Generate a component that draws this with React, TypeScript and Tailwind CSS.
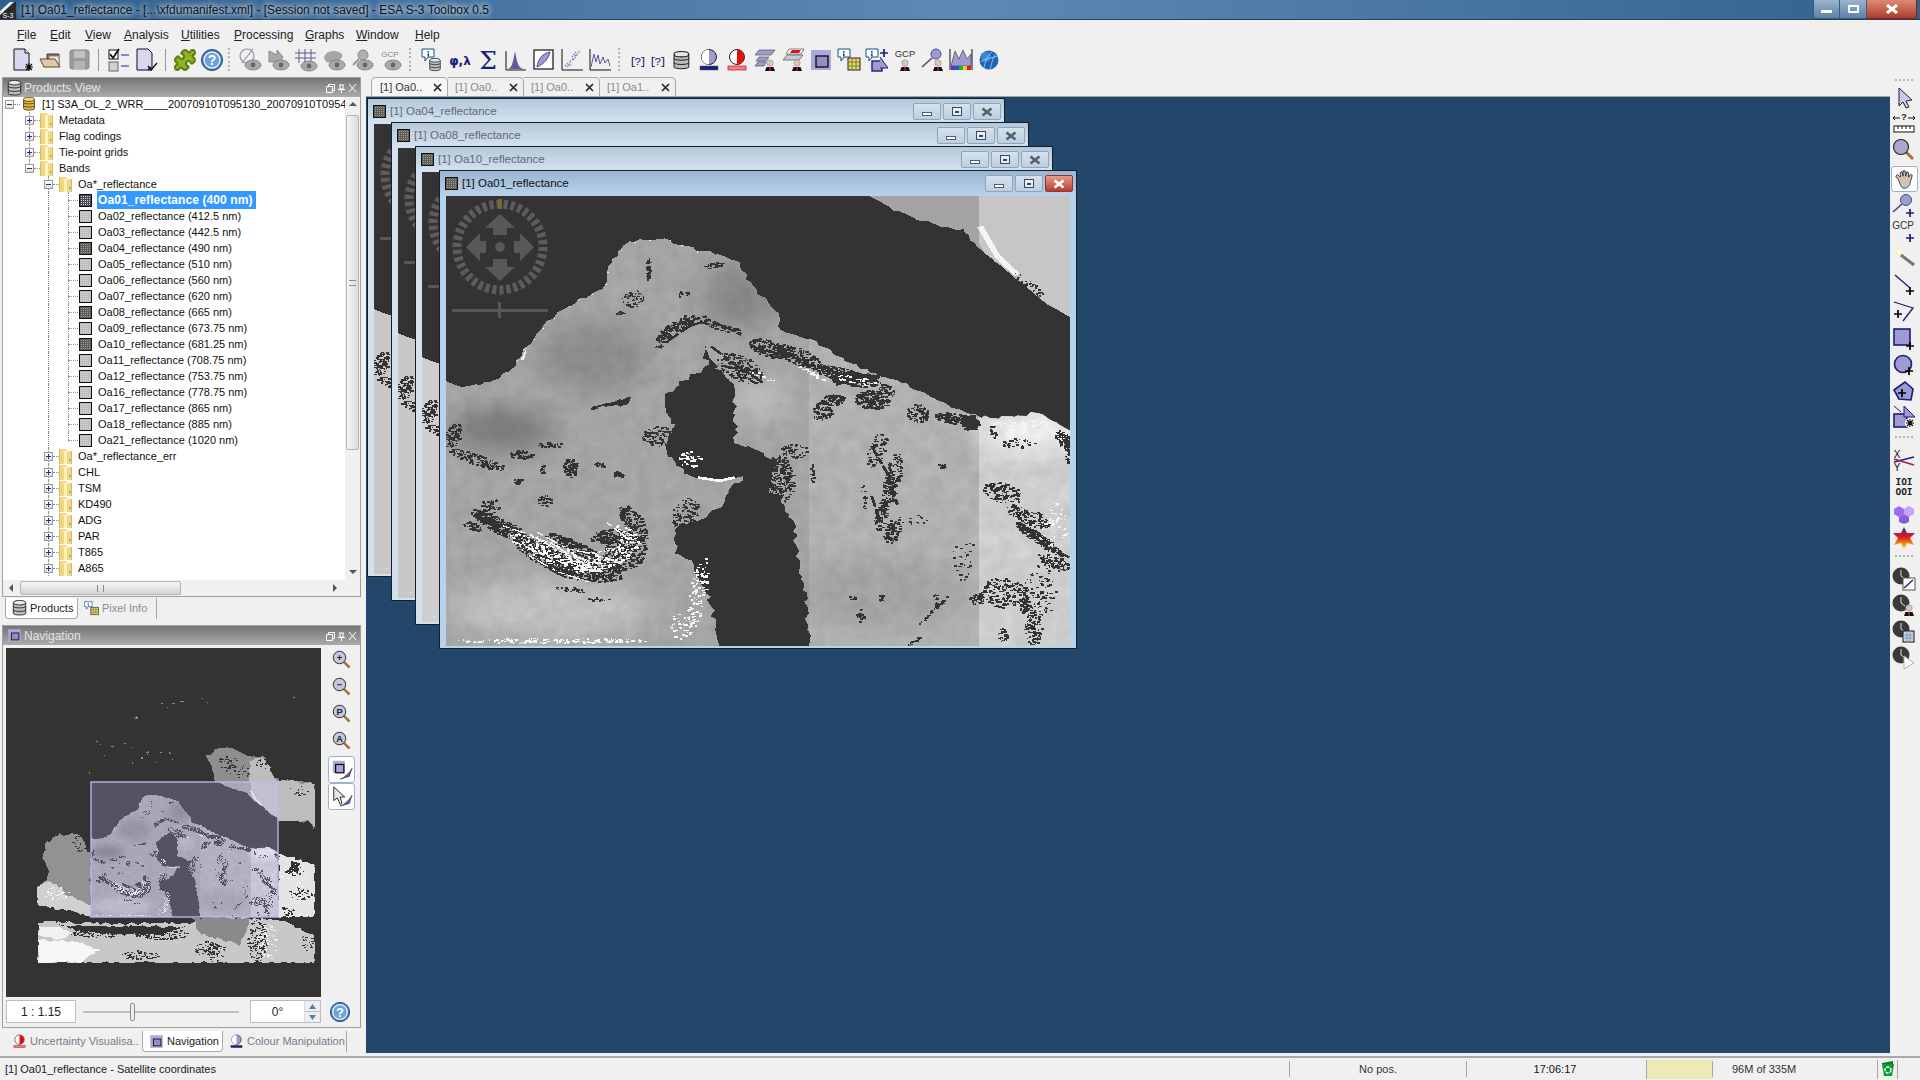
import type { ReactNode } from 'react'
import { Puzzle } from 'lucide-react'

// ---- band image (coordinates traced from the reference, stretched into the viewport) ----
type Cluster = [number, number, number, number, number, number]

function makeRng(seed: number) {
  let s = seed
  return () => {
    s = (s + 0x6d2b79f5) | 0
    let t = Math.imul(s ^ (s >>> 15), 1 | s)
    t = (t + Math.imul(t ^ (t >>> 7), 61 | t)) ^ t
    return ((t ^ (t >>> 14)) >>> 0) / 4294967296
  }
}

function scatter(seed: number, list: Cluster[], fill: string, w: number, h: number, density = 1) {
  const rnd = makeRng(seed)
  const out: ReactNode[] = []
  list.forEach(([cx, cy, rx, ry, rot, n], i) => {
    const a = (rot * Math.PI) / 180
    for (let k = 0; k < n * density; k++) {
      const r = Math.sqrt(rnd())
      const t = rnd() * Math.PI * 2
      const dx = Math.cos(t) * r * rx
      const dy = Math.sin(t) * r * ry
      const x = cx + dx * Math.cos(a) - dy * Math.sin(a)
      const y = cy + dx * Math.sin(a) + dy * Math.cos(a)
      out.push(<rect key={`${seed}-${i}-${k}`} x={x} y={y} width={w * (1 + Math.floor(rnd() * 1.8))} height={h} fill={fill} />)
    }
  })
  return out
}

// roughen a traced outline so the shores are jagged; points on the picture edge stay put
function jag(points: string, seed: number, amp: number, step = 13) {
  const rnd = makeRng(seed)
  const pts = points.split(' ').map((p) => p.split(',').map(Number))
  const out: string[] = []
  const onEdge = (x: number, y: number) => x <= 60 || x >= 1499 || y <= 108 || y >= 1462
  pts.forEach(([x, y], i) => {
    const [nx, ny] = pts[(i + 1) % pts.length]
    const n = Math.max(1, Math.round(Math.hypot(nx - x, ny - y) / step))
    for (let k = 0; k < n; k++) {
      const px = x + ((nx - x) * k) / n
      const py = y + ((ny - y) * k) / n
      if (onEdge(px, py)) out.push(`${px},${py}`)
      else out.push(`${px + (rnd() - 0.5) * amp * 2},${py + (rnd() - 0.5) * amp * 2}`)
    }
  })
  return out.join(' ')
}

const darkClusters: Cluster[] = [
  [525, 325, 5, 35, 0, 30], [675, 315, 25, 7, -15, 30], [490, 415, 28, 25, -40, 35], [605, 400, 15, 9, -30, 10], [460, 458, 12, 6, 0, 8],
  [590, 500, 55, 18, -40, 90], [690, 500, 50, 10, 20, 50], [555, 545, 22, 14, -60, 24],
  [735, 625, 60, 35, 40, 130], [800, 565, 50, 24, 25, 130], [870, 590, 60, 24, 30, 150], [965, 640, 65, 18, 15, 180], [1040, 720, 40, 28, 10, 150],
  [950, 720, 28, 16, 0, 60], [925, 755, 22, 30, 10, 60], [1145, 760, 26, 28, 0, 60], [1220, 775, 40, 16, 10, 90], [1265, 790, 20, 20, 0, 110],
  [1020, 670, 40, 12, 0, 60], [1075, 690, 25, 12, 40, 30],
  [75, 825, 18, 42, 10, 60], [130, 900, 70, 16, 25, 90], [232, 885, 28, 14, 0, 45], [300, 855, 30, 8, 0, 24],
  [345, 925, 16, 30, 0, 70], [415, 915, 15, 8, 0, 18], [280, 930, 5, 14, 0, 10], [225, 965, 10, 8, 0, 14],
  [160, 1040, 22, 26, 20, 30], [285, 1025, 15, 18, 0, 24], [120, 1100, 25, 12, 30, 30], [345, 1290, 35, 8, 10, 20], [410, 1320, 25, 6, 0, 10],
  // the swirl
  [190, 1105, 80, 22, 35, 220], [290, 1190, 90, 30, 35, 320], [380, 1230, 90, 35, 10, 340], [470, 1180, 55, 50, -60, 260], [490, 1090, 22, 60, -25, 140],
  [350, 1160, 70, 18, 30, 150], [430, 1130, 40, 20, -15, 100], [150, 1075, 40, 14, 35, 70],
  [1050, 870, 20, 55, 15, 50], [1085, 960, 18, 85, 10, 130], [1060, 1065, 14, 50, 8, 70], [1085, 1115, 18, 36, 10, 60], [1200, 918, 10, 9, 0, 16], [902, 940, 5, 28, 0, 18],
  [825, 960, 35, 75, 0, 210], [860, 875, 30, 22, 0, 36], [1340, 1000, 48, 28, 25, 90], [1400, 1070, 60, 24, 30, 90], [1425, 1140, 75, 14, 42, 150],
  [1460, 1210, 45, 18, 30, 70], [1340, 1300, 55, 45, 0, 130], [1390, 1325, 10, 42, 0, 50], [1425, 1290, 38, 85, 0, 70], [1410, 1410, 20, 55, 0, 70], [1480, 840, 16, 30, -20, 55],
  [1375, 850, 40, 14, 0, 22], [1320, 815, 10, 20, 0, 18], [1180, 1355, 55, 3, -52, 30], [1060, 1315, 6, 10, 0, 12], [1012, 1370, 9, 20, 0, 16], [1185, 1320, 5, 18, 0, 7],
  [610, 1060, 28, 50, 20, 70], [555, 830, 45, 30, 0, 90], [1130, 1080, 40, 15, 0, 10], [1250, 1195, 25, 75, 0, 22], [1020, 1010, 6, 40, 0, 9], [1000, 1315, 15, 6, 0, 4],
  [30, 770, 10, 30, 0, 10], [1490, 880, 6, 30, 0, 20], [1280, 1320, 16, 16, 0, 26], [1340, 1430, 10, 25, 0, 20], [1130, 1450, 25, 6, -40, 8],
  [1400, 375, 55, 12, 45, 26],
]
const whiteClusters: Cluster[] = [
  [620, 900, 30, 24, 0, 30], [640, 1300, 20, 110, 8, 90],
  [600, 1400, 25, 40, 0, 30], [300, 1445, 220, 8, 0, 120], [1000, 660, 50, 10, 15, 20], [900, 640, 40, 6, 35, 20],
  [1380, 790, 70, 10, 0, 40], [1460, 1100, 30, 70, 0, 40], [790, 650, 30, 8, 30, 8],
  [300, 1180, 110, 30, 30, 150], [420, 1200, 70, 30, -20, 100], [480, 1140, 20, 50, -30, 40],
]
const darkRects = scatter(11, darkClusters, '#333333', 3.5, 4.5, 1.4)
const whiteRects = scatter(23, whiteClusters, '#f6f6f6', 3.5, 4.5, 1.2)

const landPoints = jag('60,665 100,682 160,670 215,630 240,570 290,490 330,450 420,385 440,310 470,255 490,242 560,240 640,270 730,300 770,390 825,460 830,515 900,540 960,590 1060,650 1130,680 1220,740 1280,770 1340,775 1420,760 1499,815 1499,1462 60,1462', 5, 5)
const seaPoints = jag('655,555 660,630 600,660 570,700 565,750 585,800 570,860 580,900 620,950 690,965 730,950 748,962 720,985 690,1040 640,1090 585,1100 590,1180 620,1210 665,1310 690,1462 895,1462 890,1330 870,1200 860,1100 830,1020 800,990 820,900 760,865 728,860 725,760 720,680 680,620', 6, 7)
const coastPoints = jag('1035,108 1090,150 1180,190 1250,210 1300,280 1360,340 1430,420 1499,475 1499,108', 7, 5)
const coastBright = '1287,108 1499,108 1499,475 1430,420 1360,340 1300,280 1287,250'
const islands = [
  '390,748 430,730 488,712 470,738 420,745', '445,938 470,940 470,955 445,955', '940,650 1000,636 1060,650 1040,668 990,670 960,680', '1245,770 1280,765 1285,815 1255,800',
].map((p, i) => jag(p, 30 + i, 4, 8))

// white speckle along the northern shore
const shoreWhite = landPoints
  .split(' ')
  .map((p) => p.split(',').map(Number))
  .filter(([x, y], i) => x > 215 && x < 640 && y < 640 && i % 3 === 0)

// thin dark streaks along the ridge and the white stripes in the swirl
const darkStreaks = [
  '545,540 600,490 660,470', '570,545 620,500 665,480 740,525', '670,560 730,620 790,670', '700,620 780,640', '760,560 880,600', '880,610 960,640 1060,650',
  '1040,860 1075,940 1100,1040', '1380,1090 1440,1160 1495,1195', '1040,1010 1060,1090',
]
const whiteStreaks = [
  '190,1100 260,1130 340,1190 410,1210', '220,1150 290,1190 360,1230 430,1240', '270,1120 340,1170 420,1190', '300,1150 370,1210 460,1210',
  '430,1090 470,1130 450,1190', '250,1190 320,1240 390,1270',
]

function BandPicture({ land = '#ababab', rich = false }: { land?: string; rich?: boolean }) {
  return (
    <g shapeRendering="crispEdges">
      <rect x="60" y="108" width="1439" height="1354" fill="#333333" />
      <polygon points={coastPoints} fill={rich ? '#a4a4a4' : land} />
      {rich && <polygon points={coastBright} fill="#c6c6c6" />}
      <polygon points={landPoints} fill={land} />
      {rich && (
        <g clipPath="url(#land-clip)">
          <rect x="895" y="108" width="392" height="1354" fill="#ffffff" opacity="0.16" />
          <rect x="1287" y="108" width="212" height="1354" fill="#ffffff" opacity="0.5" />
          <ellipse cx="190" cy="810" rx="120" ry="70" fill="#6f6f6f" opacity="0.7" filter="url(#band-blur)" />
          <ellipse cx="400" cy="590" rx="130" ry="110" fill="#7c7c7c" opacity="0.5" filter="url(#band-blur)" />
          <ellipse cx="740" cy="410" rx="90" ry="100" fill="#747474" opacity="0.55" filter="url(#band-blur)" />
          <ellipse cx="780" cy="720" rx="70" ry="60" fill="#dddddd" opacity="0.5" filter="url(#band-blur)" />
          <ellipse cx="300" cy="1350" rx="230" ry="90" fill="#e2e2e2" opacity="0.5" filter="url(#band-blur)" />
          <ellipse cx="1400" cy="820" rx="110" ry="60" fill="#ffffff" opacity="0.85" filter="url(#band-blur)" />
          <ellipse cx="1060" cy="1300" rx="200" ry="110" fill="#777777" opacity="0.22" filter="url(#band-blur)" />
          <rect x="60" y="108" width="1439" height="1354" filter="url(#band-noise)" opacity="0.07" />
        </g>
      )}
      {rich && (
        <g fill="none">
          <polyline points="1290,200 1330,290 1375,345" stroke="#f4f4f4" strokeWidth="14" />
          <polygon points="232,600 246,565 240,600" fill="#f4f4f4" />
        </g>
      )}
      <polygon points={seaPoints} fill="#333333" />
      {islands.map((p) => (
        <polygon key={p} points={p} fill="#333333" />
      ))}
      {darkStreaks.map((p) => (
        <polyline key={p} points={p} fill="none" stroke="#333333" strokeWidth="7" strokeDasharray="34 7 18 5" />
      ))}
      {darkRects}
      {whiteStreaks.map((p) => (
        <polyline key={p} points={p} fill="none" stroke="#f4f4f4" strokeWidth="4" strokeDasharray="16 9 30 14 7 8" />
      ))}
      {whiteRects}
      {shoreWhite.map(([x, y]) => (
        <rect key={`${x}-${y}`} x={x} y={y} width="3.5" height="3.5" fill="#f2f2f2" />
      ))}
      {rich && <polyline points="640,955 690,965 725,955" stroke="#f8f8f8" strokeWidth="8" fill="none" />}
    </g>
  )
}

function BandDefs() {
  return (
    <defs>
      <clipPath id="land-clip">
        <polygon points={landPoints} />
      </clipPath>
      <filter id="band-blur" x="-60%" y="-60%" width="220%" height="220%">
        <feGaussianBlur stdDeviation="34" />
      </filter>
      <filter id="band-noise" x="0" y="0" width="100%" height="100%">
        <feTurbulence type="fractalNoise" baseFrequency="0.03 0.025" numOctaves="3" seed="4" />
        <feColorMatrix values="0 0 0 0 0  0 0 0 0 0  0 0 0 0 0  1.6 0 0 0 -0.3" />
      </filter>
    </defs>
  )
}

function Compass() {
  return (
    <svg width="112" height="124" viewBox="0 0 112 124" className="absolute left-0 top-0">
      <circle cx="54" cy="51" r="43" fill="none" stroke="#5c5c5c" strokeWidth="9" strokeDasharray="4.2 2.9" />
      <rect x="52" y="3" width="4" height="10" fill="#7a6a2a" />
      <g fill="#585858">
        <polygon points="54,18 69,32 61,32 61,39 47,39 47,32 39,32" />
        <polygon points="54,85 69,71 61,71 61,63 47,63 47,71 39,71" />
        <polygon points="20,51 34,37 34,45 40,45 40,57 34,57 34,65" />
        <polygon points="88,51 74,37 74,45 68,45 68,57 74,57 74,65" />
        <circle cx="54" cy="51" r="5" />
        <rect x="6" y="113" width="96" height="3" />
        <rect x="52" y="106" width="3" height="16" />
      </g>
    </svg>
  )
}

// ---- small icons ----
function Ico({ children, size = 24 }: { children: ReactNode; size?: number }) {
  return (
    <svg width={size} height={size} viewBox="0 0 24 24" className="shrink-0">
      {children}
    </svg>
  )
}

const lav = '#9c9cd0'
const navy = '#1c1c7c'

const Eye = ({ y = 17 }: { y?: number }) => (
  <g>
    <ellipse cx="15" cy={y} rx="8" ry="5" fill="#a9a9a9" stroke="#777" strokeWidth="0.8" />
    <circle cx="15" cy={y} r="2.4" fill="#666" />
  </g>
)

const Person = ({ x = 14, y = 12 }: { x?: number; y?: number }) => (
  <g transform={`translate(${x} ${y})`}>
    <circle cx="5" cy="3" r="3.2" fill="#d8c8b4" stroke="#999" strokeWidth="0.7" />
    <path d="M0 11 L1.5 7 L8.5 7 L10 11 Z" fill="#111" />
    <rect x="4.3" y="7" width="1.4" height="4" fill="#c81e1e" />
  </g>
)

const Db = ({ x = 3, y = 3, s = 1 }: { x?: number; y?: number; s?: number }) => (
  <g transform={`translate(${x} ${y}) scale(${s})`} stroke="#222" strokeWidth="1">
    <path d="M1 3 V15 C1 17.5 15 17.5 15 15 V3" fill="#bdbdbd" />
    <ellipse cx="8" cy="3" rx="7" ry="2.6" fill="#e6e6e6" />
    <path d="M1 7 C1 9.5 15 9.5 15 7 M1 11 C1 13.5 15 13.5 15 11" fill="none" />
  </g>
)

const Plus = ({ x = 18, y = 19, c = '#000' }: { x?: number; y?: number; c?: string }) => (
  <path d={`M${x - 4} ${y} H${x + 4} M${x} ${y - 4} V${y + 4}`} stroke={c} strokeWidth="1.7" />
)

const Spark = ({ x = 17, y = 18 }: { x?: number; y?: number }) => (
  <path d={`M${x - 4} ${y} H${x + 4} M${x} ${y - 4} V${y + 4} M${x - 3} ${y - 3} L${x + 3} ${y + 3} M${x - 3} ${y + 3} L${x + 3} ${y - 3}`} stroke="#000" strokeWidth="1.1" />
)

const Lens = ({ c = '#a7a7cf' }: { c?: string }) => (
  <g>
    <path d="M14 14 L21 21" stroke="#a8703c" strokeWidth="3" />
    <circle cx="9" cy="9" r="7.5" fill={c} stroke="#222" strokeWidth="1.1" />
  </g>
)

const Clock = ({ children }: { children?: ReactNode }) => (
  <g>
    <circle cx="9" cy="9" r="8.5" fill="#3a3a3a" />
    <path d="M9 3 V9 L13 12" stroke="#ddd" strokeWidth="1" fill="none" />
    {children}
  </g>
)

function HelpGlyph() {
  return (
    <g>
      <circle cx="12" cy="12" r="10.5" fill="#3d78b8" stroke="#1c4a80" />
      <circle cx="12" cy="12" r="8" fill="#6ea2d8" stroke="#e8f2fb" strokeWidth="1.4" />
      <text x="12" y="17" textAnchor="middle" fontSize="14" fontWeight="700" fill="#fff" fontFamily="Liberation Sans, sans-serif">?</text>
    </g>
  )
}

function UncertGlyph() {
  return (
    <g>
      <circle cx="12" cy="9" r="7.5" fill="#fff" stroke="#222" />
      <path d="M12 1.5 A7.5 7.5 0 0 1 12 16.5 Z" fill="#e01010" />
      <rect x="3" y="18" width="18" height="4" fill="#f2808a" stroke="#c01020" strokeWidth="0.7" />
    </g>
  )
}

function NavGlyph() {
  return (
    <g>
      <rect x="2" y="2" width="20" height="20" fill="#a8a8dc" />
      <rect x="7" y="8" width="12" height="11" fill="#9090c4" stroke="#111" strokeWidth="1.4" />
    </g>
  )
}

const icons: Record<string, ReactNode> = {
  new: (
    <g>
      <path d="M3 1 H14 L18 5 V22 H3 Z" fill="#d8d8f2" stroke="#111" />
      <path d="M14 1 V5 H18" fill="#fff" stroke="#111" />
      <Spark x={18} y={19} />
    </g>
  ),
  open: (
    <g>
      <path d="M8 6 H20 V18 H8 Z" fill="#8c5a48" stroke="#444" />
      <path d="M10 8 H20 V16 H10 Z" fill="#f2eada" stroke="#888" />
      <path d="M1 11 H16 L21 19 H5 Z" fill="#e2c8a4" stroke="#5a4632" />
    </g>
  ),
  save: (
    <g>
      <rect x="3" y="2" width="19" height="19" rx="2" fill="#9a9a9a" stroke="#8a8a8a" />
      <rect x="7" y="3" width="11" height="7" fill="#c2c2c2" />
      <rect x="7" y="13" width="11" height="8" fill="#b4b4b4" />
    </g>
  ),
  checks: (
    <g>
      <rect x="3" y="2" width="9" height="9" fill="#fff" stroke="#111" />
      <path d="M4 6 L7 10 L13 1" stroke="#111" strokeWidth="1.8" fill="none" />
      <rect x="3" y="14" width="9" height="9" fill="#cfcfcf" stroke="#666" />
      <path d="M15 7 H23 M15 18 H23" stroke="#8a8ac0" strokeWidth="2" />
    </g>
  ),
  doc: (
    <g>
      <path d="M3 1 H14 L18 5 V22 H3 Z" fill="#d8d8f2" stroke="#111" />
      <path d="M14 22 L17 19 M14 18 L17 22 L23 15" stroke="#111" strokeWidth="1.4" fill="none" />
    </g>
  ),
  puzzle: <Puzzle size={24} fill="#8fb51f" stroke="#5e7c10" />,
  help: <HelpGlyph />,
  eyeNo: (
    <g>
      <circle cx="9" cy="8" r="7" fill="none" stroke="#9090b0" strokeWidth="1.2" />
      <path d="M4 15 L15 1" stroke="#9090b0" strokeWidth="1.2" />
      <Eye />
    </g>
  ),
  eyeShape: (
    <g>
      <path d="M3 3 V14 H14 L17 9 L11 2 V7 Z" fill="#a9a9a9" stroke="#888" />
      <Eye />
    </g>
  ),
  eyeGrid: (
    <g>
      <path d="M5 1 V15 M11 1 V15 M17 1 V15 M1 5 H22 M1 10 H22" stroke="#5a5a90" strokeWidth="1" />
      <Eye y={18} />
    </g>
  ),
  eyeBlob: (
    <g>
      <path d="M2 10 C3 2 15 1 20 6 C22 12 12 16 4 14 Z" fill="#a6a6a6" />
      <Eye />
    </g>
  ),
  eyePin: (
    <g>
      <circle cx="13" cy="7" r="5" fill="#b0b0b0" stroke="#888" />
      <path d="M9 11 L3 17" stroke="#999" strokeWidth="2" />
      <Eye />
    </g>
  ),
  eyeGcp: (
    <g>
      <text x="12" y="9" textAnchor="middle" fontSize="8" fill="#888" fontFamily="Liberation Sans, sans-serif">GCP</text>
      <Eye y={17} />
    </g>
  ),
  infoDb: (
    <g>
      <path d="M2 1 H14 V9 H8 L5 13 V9 H2 Z" fill="#fff" stroke="#1c4a80" />
      <rect x="7.5" y="3" width="1.6" height="1.6" fill="#1c4a80" />
      <rect x="7.5" y="5.5" width="1.6" height="3" fill="#1c4a80" />
      <Db x={9} y={10} s={0.75} />
    </g>
  ),
  sigma: <text x="12" y="21" textAnchor="middle" fontSize="25" fill={navy} fontFamily="DejaVu Serif, serif">Σ</text>,
  phi: <text x="12" y="17" textAnchor="middle" fontSize="12" fontWeight="700" fill={navy} fontFamily="DejaVu Sans, sans-serif">φ,λ</text>,
  hist: (
    <g>
      <path d="M2 3 V22 H22" stroke="#111" fill="none" />
      <path d="M3 21 C8 21 9 14 11 3 C13 14 14 21 21 21 Z" fill="#5c5ca4" />
    </g>
  ),
  curve: (
    <g>
      <rect x="2" y="2" width="19" height="19" fill="#fff" stroke="#111" strokeWidth="1.2" />
      <path d="M5 19 C6 11 11 5 18 4 C17 10 12 16 5 19 Z" fill={lav} stroke="#4a4a8a" />
    </g>
  ),
  scatter: (
    <g>
      <path d="M2 1 V22 H23" stroke="#111" fill="none" />
      <path d="M5 18 L8 15 M8 17 L11 13 M10 13 L14 10 M13 12 L17 7 M15 8 L20 3 M7 19 L12 16 M12 9 L16 4" stroke="#7474c0" strokeWidth="1.3" strokeDasharray="1.4 1.2" />
    </g>
  ),
  profile: (
    <g>
      <path d="M2 1 V22 H23" stroke="#111" fill="none" />
      <path d="M3 19 L6 6 L8 14 L10 7 L12 16 L15 9 L17 15 L20 11 L22 18" stroke="#5858a4" fill="none" />
    </g>
  ),
  q1: <text x="12" y="17" textAnchor="middle" fontSize="12.5" fill="#101060" fontFamily="Liberation Mono, monospace" letterSpacing="-2">[?]</text>,
  dbBig: <Db x={4} y={3} s={1.05} />,
  contrast: (
    <g>
      <circle cx="12" cy="9" r="7.5" fill={lav} stroke="#222" />
      <path d="M12 1.5 A7.5 7.5 0 0 0 12 16.5 Z" fill="#fff" />
      <rect x="3" y="18" width="18" height="4" fill={navy} stroke="#555" strokeWidth="0.5" />
    </g>
  ),
  uncert: <UncertGlyph />,
  layers: (
    <g>
      <path d="M6 2 H22 L18 7 H2 Z M6 9 H16 L13 13 H3 Z M5 14 H13 L11 18 H2 Z" fill={lav} stroke="#555" strokeWidth="0.7" />
      <Person x={12} y={12} />
    </g>
  ),
  layersRed: (
    <g>
      <path d="M6 7 H22 L18 12 H2 Z" fill="#c8c8e0" stroke="#555" strokeWidth="0.7" />
      <path d="M8 1 H23 L20 6 H5 Z" fill="#fff" stroke="#555" strokeWidth="0.7" />
      <path d="M11 2 H20 L18 5 H9 Z" fill="#dc1414" />
      <Person x={11} y={12} />
    </g>
  ),
  nav: <NavGlyph />,
  dbInfo: (
    <g>
      <path d="M1 1 H13 V9 H7 L4 13 V9 H1 Z" fill="#fff" stroke="#1c4a80" />
      <rect x="6" y="3" width="1.6" height="1.6" fill="#1c4a80" />
      <rect x="6" y="5.5" width="1.6" height="3" fill="#1c4a80" />
      <rect x="11" y="10" width="12" height="12" fill="#e8dc48" stroke="#222" />
      <path d="M15 10 V22 M19 10 V22 M11 14 H23 M11 18 H23" stroke="#777" />
    </g>
  ),
  shapeInfo: (
    <g>
      <path d="M1 1 H13 V9 H7 L4 13 V9 H1 Z" fill="#fff" stroke="#1c4a80" />
      <rect x="6" y="3" width="1.6" height="1.6" fill="#1c4a80" />
      <rect x="6" y="5.5" width="1.6" height="3" fill="#1c4a80" />
      <rect x="7" y="13" width="10" height="10" fill={lav} stroke={navy} strokeWidth="1.4" />
      <path d="M15 9 L23 20 H15" fill={lav} stroke={navy} />
      <Plus x={19} y={5} c={navy} />
    </g>
  ),
  gcpP: (
    <g>
      <text x="12" y="9" textAnchor="middle" fontSize="9.5" fill="#333" fontFamily="Liberation Sans, sans-serif">GCP</text>
      <Person x={7} y={12} />
    </g>
  ),
  pinP: (
    <g>
      <circle cx="15" cy="6" r="5" fill={lav} stroke="#4a4a8a" />
      <path d="M11 10 L1 19" stroke="#4a4a8a" strokeWidth="1.6" />
      <Person x={12} y={12} />
    </g>
  ),
  histColor: (
    <g>
      <path d="M1 1 V22 M23 1 V22" stroke="#111" />
      <path d="M2 18 L6 3 L10 11 L14 2 L18 11 L22 6 V18 Z" fill={lav} stroke="#444" strokeWidth="0.7" />
      <rect x="2" y="18" width="4" height="4" fill="#7a2ab0" />
      <rect x="6" y="18" width="4" height="4" fill="#1c5ae0" />
      <rect x="10" y="18" width="4" height="4" fill="#20b030" />
      <rect x="14" y="18" width="4" height="4" fill="#e8d020" />
      <rect x="18" y="18" width="4" height="4" fill="#e02020" />
    </g>
  ),
  globe: (
    <g>
      <circle cx="12" cy="12" r="9.5" fill="#1c64b8" />
      <circle cx="9" cy="9" r="5" fill="#4a94dc" opacity="0.7" />
      <path d="M4 14 C9 10 16 10 21 8 M7 20 C8 12 12 6 16 3 M13 21 C15 16 15 10 19 6" stroke="#bcdcf4" strokeWidth="0.7" fill="none" />
    </g>
  ),
  // right bar
  arrow: <path d="M7 2 V20 L11 16 L14 22 L17 21 L14 15 L20 14 Z" fill="#c8c8ea" stroke="#222" />,
  ruler: (
    <g>
      <text x="12" y="9" textAnchor="middle" fontSize="9.5" fontWeight="700" fill="#222" fontFamily="Liberation Sans, sans-serif">?</text>
      <path d="M1 7 H8 M16 7 H23 M3 5 L1 7 L3 9 M21 5 L23 7 L21 9" stroke="#111" fill="none" />
      <rect x="2" y="15" width="20" height="6" fill="#fff" stroke="#111" />
      <path d="M6 15 V18 M10 15 V18 M14 15 V18 M18 15 V18" stroke="#111" />
    </g>
  ),
  lens: <Lens />,
  hand: (
    <g>
      <path d="M6 13 L3 9 L5 7 L8 10 V5 L10 4 L11 9 V3 L13 3 L14 9 L15 4 L17 5 L17 10 L19 7 L21 8 L19 15 C18 20 16 22 12 22 C9 22 8 18 6 13 Z" fill="#cfc4b4" stroke="#333" />
    </g>
  ),
  pinPlus: (
    <g>
      <circle cx="14" cy="6" r="5.5" fill={lav} stroke="#4a4a8a" />
      <path d="M10 10 L1 18" stroke="#4a4a8a" strokeWidth="1.6" />
      <Plus x={18} y={19} c={navy} />
    </g>
  ),
  gcpPlus: (
    <g>
      <text x="11" y="9" textAnchor="middle" fontSize="10" fill="#333" fontFamily="Liberation Sans, sans-serif">GCP</text>
      <Plus x={18} y={18} c={navy} />
    </g>
  ),
  wand: (
    <g>
      <path d="M9 9 L22 19" stroke="#777" strokeWidth="3" />
      <circle cx="7" cy="6" r="3" fill="#fdf6a0" />
      <circle cx="7" cy="6" r="1.5" fill="#fff" />
    </g>
  ),
  linePlus: (
    <g>
      <path d="M3 3 L18 16" stroke={navy} strokeWidth="1.3" />
      <Plus x={18} y={19} />
    </g>
  ),
  polyPlus: (
    <g>
      <path d="M2 3 L21 9 L11 22" stroke={navy} strokeWidth="1.3" fill="none" />
      <Plus x={6} y={15} />
    </g>
  ),
  rectPlus: (
    <g>
      <rect x="2" y="2" width="16" height="16" fill={lav} stroke={navy} strokeWidth="1.6" />
      <Plus x={18} y={19} />
    </g>
  ),
  circlePlus: (
    <g>
      <circle cx="11" cy="10" r="8.5" fill={lav} stroke={navy} strokeWidth="1.6" />
      <Plus x={17} y={17} />
    </g>
  ),
  polyFill: (
    <g>
      <path d="M2 10 L13 2 L21 9 L19 20 L7 19 Z" fill={lav} stroke={navy} strokeWidth="1.6" />
      <Plus x={10} y={13} />
    </g>
  ),
  shapes: (
    <g>
      <rect x="2" y="9" width="13" height="13" fill={lav} stroke={navy} strokeWidth="1.6" />
      <path d="M12 1 L23 12 H12 Z" fill={lav} stroke={navy} />
      <path d="M2 1 L9 7" stroke={navy} />
      <circle cx="18" cy="18" r="5" fill="#fff" />
      <Spark x={18} y={18} />
    </g>
  ),
  xy: (
    <g>
      <text x="5" y="10" textAnchor="middle" fontSize="10" fill="#111" fontFamily="Liberation Sans, sans-serif">X</text>
      <text x="5" y="23" textAnchor="middle" fontSize="10" fill="#111" fontFamily="Liberation Sans, sans-serif">Y</text>
      <path d="M2 14 L22 9" stroke="#1c1c9c" strokeWidth="1.6" />
      <path d="M2 11 L22 17" stroke="#a81c3c" strokeWidth="1.6" />
    </g>
  ),
  bits: (
    <g fontFamily="DejaVu Sans Mono, monospace" fontWeight="700" fontSize="9.5" fill="#222" textAnchor="middle">
      <text x="12" y="10">IOI</text>
      <text x="12" y="20">OOI</text>
    </g>
  ),
  hex: (
    <g>
      <path d="M2 8 L7 5 L12 8 V13 L7 16 L2 13 Z" fill="#9a6cf0" />
      <path d="M12 8 L17 5 L22 8 V13 L17 16 L12 13 Z" fill="#c4a4f4" />
      <path d="M7 16 L12 13 L17 16 V21 L12 23 L7 21 Z" fill="#8c5ce0" />
    </g>
  ),
  star: (
    <g>
      <defs>
        <linearGradient id="star-grad" x1="0" y1="0" x2="0" y2="1">
          <stop offset="0" stopColor="#2030c0" />
          <stop offset="0.45" stopColor="#e01818" />
          <stop offset="0.8" stopColor="#f0a010" />
          <stop offset="1" stopColor="#d8d840" />
        </linearGradient>
      </defs>
      <path d="M12 1 L15 7 L23 7 L18 12 L22 19 L15 17 L12 23 L9 17 L2 19 L6 12 L1 7 L9 7 Z" fill="url(#star-grad)" />
    </g>
  ),
  clockPlot: (
    <Clock>
      <rect x="11" y="11" width="12" height="12" fill="#fff" stroke="#555" />
      <path d="M12 21 L21 13" stroke={navy} strokeWidth="1.3" />
    </Clock>
  ),
  clockPerson: (
    <Clock>
      <Person x={12} y={11} />
    </Clock>
  ),
  clockGrid: (
    <Clock>
      <rect x="11" y="11" width="11" height="11" fill="#c8d8e8" stroke="#111" />
      <path d="M15 11 V22 M18 11 V22 M11 15 H22 M11 18 H22" stroke="#8898b0" />
    </Clock>
  ),
  clockPlay: (
    <Clock>
      <path d="M12 10 L22 17 L12 23 Z" fill="#fff" stroke="#aaa" />
    </Clock>
  ),
}

// ---- title bars, trees, tabs ----
function Grip({ vertical = false }: { vertical?: boolean }) {
  if (vertical) {
    return (
      <div className="h-[24px] w-[5px] shrink-0 flex flex-col justify-between">
        {[0, 1, 2, 3, 4, 5].map((i) => (
          <span key={i} className="w-[2px] h-[2px] bg-[#b4b4b4]" />
        ))}
      </div>
    )
  }
  return (
    <div className="w-[18px] h-[5px] flex justify-between">
      {[0, 1, 2, 3, 4].map((i) => (
        <span key={i} className="w-[2px] h-[2px] bg-[#b4b4b4]" />
      ))}
    </div>
  )
}

function PanelHeader({ title, icon }: { title: string; icon: ReactNode }) {
  return (
    <div className="h-[19px] flex items-center bg-gradient-to-b from-[#757575] to-[#acacac] pl-[4px] pr-[4px] shrink-0">
      <div className="w-[15px] h-[16px] flex items-center justify-center shrink-0">{icon}</div>
      <span className="ml-[2px] text-[12px] text-[#e4e4e4] flex-1">{title}</span>
      <svg width="32" height="12" viewBox="0 0 32 12" fill="none" stroke="#fff" strokeWidth="1">
        <path d="M2.5 4.5 H8.5 V10.5 H2.5 Z M4.5 4.5 V2.5 H10.5 V8.5 H8.5" />
        <path d="M15 3 H20 M16 3 V7 H19 V3 M14 7.5 H21 M17.5 8 V11" />
        <path d="M25 2 L32 10 M32 2 L25 10" />
      </svg>
    </div>
  )
}

function BandIcon({ kind = 'plain' }: { kind?: 'plain' | 'open' | 'active' }) {
  const fill = kind === 'plain' ? '#bcbcbc' : kind === 'open' ? '#5c5c5c' : '#44447c'
  const dot = kind === 'plain' ? '#d8d8d8' : kind === 'open' ? '#a0a080' : '#e8e060'
  return (
    <svg width="13" height="13" viewBox="0 0 13 13" className="shrink-0">
      <rect x="0.5" y="0.5" width="12" height="12" fill={fill} stroke="#111" />
      {[2, 4, 6, 8, 10].map((y) =>
        [2, 4, 6, 8, 10].map((x) => <rect key={`${x}${y}`} x={x} y={y} width="1" height="1" fill={dot} />),
      )}
    </svg>
  )
}

function Folder() {
  return (
    <svg width="13" height="16" viewBox="0 0 13 16" className="shrink-0">
      <path d="M0 1 H7 L8 3 H13 V16 H0 Z" fill="#f0d87c" />
      <path d="M5 3 H8 V16 H5 Z" fill="#fdf2bc" />
      <path d="M0.5 1 V16 M12.5 3 V16" stroke="#d4bc60" />
      <rect x="10" y="11" width="1.5" height="2" fill="#6ea2d8" />
    </svg>
  )
}

function Expander({ open }: { open: boolean }) {
  return (
    <span className="relative w-[9px] h-[9px] border border-[#9a9a9a] bg-gradient-to-b from-white to-[#dcdce8] shrink-0">
      <span className="absolute left-[1px] top-[3px] w-[5px] h-[1px] bg-[#1c3c7c]" />
      {!open && <span className="absolute left-[3px] top-[1px] w-[1px] h-[5px] bg-[#1c3c7c]" />}
    </span>
  )
}

type Row = { label: string; depth: number; open?: boolean; kind?: 'plain' | 'open' | 'active' }

const rows: Row[] = [
  { label: '[1] S3A_OL_2_WRR____20070910T095130_20070910T095443', depth: 0, open: true },
  { label: 'Metadata', depth: 1 },
  { label: 'Flag codings', depth: 1 },
  { label: 'Tie-point grids', depth: 1 },
  { label: 'Bands', depth: 1, open: true },
  { label: 'Oa*_reflectance', depth: 2, open: true },
  { label: 'Oa01_reflectance (400 nm)', depth: 3, kind: 'active' },
  { label: 'Oa02_reflectance (412.5 nm)', depth: 3 },
  { label: 'Oa03_reflectance (442.5 nm)', depth: 3 },
  { label: 'Oa04_reflectance (490 nm)', depth: 3, kind: 'open' },
  { label: 'Oa05_reflectance (510 nm)', depth: 3 },
  { label: 'Oa06_reflectance (560 nm)', depth: 3 },
  { label: 'Oa07_reflectance (620 nm)', depth: 3 },
  { label: 'Oa08_reflectance (665 nm)', depth: 3, kind: 'open' },
  { label: 'Oa09_reflectance (673.75 nm)', depth: 3 },
  { label: 'Oa10_reflectance (681.25 nm)', depth: 3, kind: 'open' },
  { label: 'Oa11_reflectance (708.75 nm)', depth: 3 },
  { label: 'Oa12_reflectance (753.75 nm)', depth: 3 },
  { label: 'Oa16_reflectance (778.75 nm)', depth: 3 },
  { label: 'Oa17_reflectance (865 nm)', depth: 3 },
  { label: 'Oa18_reflectance (885 nm)', depth: 3 },
  { label: 'Oa21_reflectance (1020 nm)', depth: 3 },
  { label: 'Oa*_reflectance_err', depth: 2 },
  { label: 'CHL', depth: 2 },
  { label: 'TSM', depth: 2 },
  { label: 'KD490', depth: 2 },
  { label: 'ADG', depth: 2 },
  { label: 'PAR', depth: 2 },
  { label: 'T865', depth: 2 },
  { label: 'A865', depth: 2 },
]

function DottedV({ x, full = true }: { x: number; full?: boolean }) {
  return (
    <span
      className="absolute top-0 w-0 border-l border-dotted border-[#8a8a8a]"
      style={{ left: x, height: full ? 16 : 8 }}
    />
  )
}

function TreeRow({ row, index }: { row: Row; index: number }) {
  const selected = index === 6
  const indent = [2, 22, 41, 65][row.depth]
  return (
    <div className="relative h-[16px] flex items-center whitespace-nowrap">
      {index >= 1 && index <= 4 && <DottedV x={26} full={index !== 4} />}
      {index >= 5 && <DottedV x={45} />}
      {index >= 6 && index <= 21 && <DottedV x={65} full={index !== 21} />}
      <div className="flex items-center relative" style={{ paddingLeft: indent }}>
        {row.depth < 3 ? (
          <>
            <Expander open={!!row.open} />
            <span className="w-[6px] border-t border-dotted border-[#8a8a8a] shrink-0" />
            {row.depth === 0 ? (
              <span className="ml-[2px] shrink-0 flex">
                <svg width="14" height="14" viewBox="0 0 16 18">
                  <path d="M1 3 V15 C1 17.5 15 17.5 15 15 V3" fill="#e8b830" stroke="#333" />
                  <ellipse cx="8" cy="3" rx="7" ry="2.6" fill="#f6dc70" stroke="#333" />
                  <path d="M1 7 C1 9.5 15 9.5 15 7 M1 11 C1 13.5 15 13.5 15 11" fill="none" stroke="#333" />
                </svg>
              </span>
            ) : (
              <Folder />
            )}
            <span className="ml-[6px]">{row.label}</span>
          </>
        ) : (
          <>
            <span className="w-[10px] border-t border-dotted border-[#8a8a8a] shrink-0" />
            <span className="ml-[1px] flex">
              <BandIcon kind={row.kind} />
            </span>
            <span
              className={selected ? 'ml-[5px] pl-[1px] pr-[3px] bg-[#3399ff] text-white font-bold text-[12px] tracking-[0.1px]' : 'ml-[5px] pl-[1px]'}
            >
              {row.label}
            </span>
          </>
        )}
      </div>
    </div>
  )
}

function ScrollArrow({ dir }: { dir: 'up' | 'down' | 'left' | 'right' }) {
  const pts = { up: '1,6 5,2 9,6', down: '1,2 5,6 9,2', left: '6,1 2,5 6,9', right: '3,1 7,5 3,9' }[dir]
  return (
    <svg width="10" height="10" viewBox="0 0 10 10" className="shrink-0">
      <polygon points={pts} fill="#555" />
    </svg>
  )
}

function ProductsPanel() {
  return (
    <div className="h-[520px] ml-[2px] w-[359px] border border-[#a0a0a0] flex flex-col bg-[#f0f0f0]">
      <PanelHeader title="Products View" icon={<svg width="15" height="16" viewBox="0 0 16 18"><Db x={0} y={0} /></svg>} />
      <div className="flex h-[483px]">
        <div className="flex-1 min-w-0 bg-white overflow-hidden text-[11px] text-[#101010]">
          <div className="-mt-[1px]">
            {rows.map((row, i) => (
              <TreeRow key={i} row={row} index={i} />
            ))}
          </div>
        </div>
        <div className="w-[15px] flex flex-col items-center bg-[#f0f0f0]">
          <div className="h-[16px] flex items-center"><ScrollArrow dir="up" /></div>
          <div className="w-[13px] h-[335px] mt-[2px] rounded-[2px] border border-[#b4b4b4] bg-gradient-to-r from-[#f6f6f6] to-[#dadada] flex items-center justify-center">
            <span className="w-[7px] h-[6px] border-y border-[#888]" />
          </div>
          <div className="flex-1" />
          <div className="h-[14px] flex items-center"><ScrollArrow dir="down" /></div>
        </div>
      </div>
      <div className="flex-1 flex items-center bg-[#f0f0f0] pl-[4px] pr-[20px]">
        <ScrollArrow dir="left" />
        <div className="ml-[3px] w-[161px] h-[14px] rounded-[2px] border border-[#b4b4b4] bg-gradient-to-b from-[#f6f6f6] to-[#d4d4d4] flex items-center justify-center">
          <span className="w-[7px] h-[7px] border-x border-[#888]" />
        </div>
        <div className="flex-1" />
        <ScrollArrow dir="right" />
      </div>
    </div>
  )
}

function BottomTab({ label, icon, active = false, width }: { label: string; icon: ReactNode; active?: boolean; width: string }) {
  return (
    <div
      className={
        active
          ? `${width} h-[21px] flex items-center pl-[6px] bg-white rounded-b-[4px] border border-t-0 border-[#a8a8a8] text-[#222]`
          : `${width} h-[21px] flex items-center pl-[4px] text-[#7a7a8a]`
      }
    >
      {icon}
      <span className="ml-[3px] whitespace-nowrap">{label}</span>
    </div>
  )
}

const overviewLand: [string, string][] = (
  [
    ['135,615 180,582 240,585 272,650 272,835 220,825 130,772 115,740 150,700 130,650', '#929292'],
    ['115,745 150,720 205,765 272,795 272,832 115,800', '#d0d0d0'],
    ['620,350 660,322 700,322 730,345 790,350 830,420 945,430 945,565 925,545 835,540 750,470 650,425 640,400', '#8e8e8e'],
    ['750,360 790,350 830,420 945,430 945,565 925,545 835,540 750,470', '#bdbdbd'],
    ['835,640 945,672 945,832 835,832', '#e4e4e4'],
    ['115,845 280,850 560,850 680,835 840,838 945,890 945,968 115,968', '#c8c8c8'],
    ['580,835 750,835 720,915 600,880', '#8a8a8a'],
    ['115,860 170,860 220,880 180,900 115,885', '#f2f2f2'],
    ['115,900 240,905 300,930 240,968 115,968', '#f6f6f6'],
    ['115,802 210,812 272,832 272,838 115,842', '#333333'],
    ['175,855 560,862 470,885 250,878', '#333333'],
    ['870,660 900,672 890,700 870,690', '#333333'],
  ] as [string, string][]
).map(([p, c], i) => [jag(p, 50 + i, 5, 11), c])

function Overview() {
  return (
    <svg width="315" height="349" viewBox="18 24 945 1047" preserveAspectRatio="none" className="shrink-0 block">
      <rect x="18" y="24" width="945" height="1047" fill="#333333" />
      <g shapeRendering="crispEdges">
        {overviewLand.map(([p, c]) => (
          <polygon key={p} points={p} fill={c} />
        ))}
        <rect x="945" y="400" width="20" height="600" fill="#333333" />
        <rect x="100" y="968" width="860" height="20" fill="#333333" />
        {scatter(41, [
          [190, 830, 70, 18, 0, 60], [240, 610, 25, 25, 50, 24], [300, 880, 90, 12, 0, 70], [480, 880, 80, 18, 0, 130], [620, 925, 40, 22, 0, 70],
          [770, 900, 30, 65, 0, 130], [700, 380, 60, 24, 30, 50], [800, 370, 40, 16, 0, 22], [900, 450, 40, 14, 0, 16], [880, 690, 30, 16, 0, 26],
          [900, 760, 35, 20, 0, 36], [860, 810, 20, 14, 0, 16], [420, 945, 60, 14, 0, 60], [650, 940, 20, 30, 30, 24], [920, 900, 25, 30, 0, 26],
        ], '#333333', 3.5, 3.5)}
        {scatter(42, [[800, 900, 30, 60, 0, 70], [170, 760, 40, 22, 0, 30], [880, 720, 50, 50, 0, 40]], '#f6f6f6', 3.5, 3.5)}
        {scatter(43, [[520, 180, 110, 20, 0, 7], [880, 170, 3, 3, 0, 2], [330, 320, 70, 30, 0, 6], [440, 350, 90, 20, 0, 10], [260, 400, 6, 8, 0, 1], [410, 232, 20, 4, 0, 4]], '#8a8a8a', 3.5, 3.5)}
      </g>
      <svg x="272" y="425" width="563" height="407" viewBox="60 108 1439 1354" preserveAspectRatio="none">
        <BandPicture rich />
      </svg>
      <rect x="273" y="426" width="561" height="405" fill="#b0b0ee" fillOpacity="0.26" stroke="#bcbcee" strokeWidth="4" />
    </svg>
  )
}

function NavButton({ children, toggle = false }: { children: ReactNode; toggle?: boolean }) {
  return (
    <div
      className={
        toggle
          ? 'w-[27px] h-[27px] flex items-center justify-center bg-white border border-[#9ab4cc] rounded-[3px]'
          : 'w-[27px] h-[27px] flex items-center justify-center'
      }
    >
      {children}
    </div>
  )
}

function NavigationPanel() {
  return (
    <div className="h-[403px] ml-[2px] w-[359px] mt-[6px] border border-[#a0a0a0] flex flex-col bg-[#f0f0f0]">
      <PanelHeader title="Navigation" icon={<Ico size={15}>{icons.nav}</Ico>} />
      <div className="flex pl-[3px] pt-[3px]">
        <Overview />
        <div className="ml-[7px] -mt-[2px] flex flex-col">
          {['+', '−', 'P', 'A'].map((g) => (
            <NavButton key={g}>
              <Ico size={20}>
                <Lens c="#c6c6e0" />
                <text x="9" y="13" textAnchor="middle" fontSize="11" fontWeight="700" fill="#222" fontFamily="Liberation Sans, sans-serif">{g}</text>
              </Ico>
            </NavButton>
          ))}
          <div className="h-[2px]" />
          <NavButton toggle>
            <Ico size={22}>
              <rect x="2" y="2" width="13" height="13" fill="#a8a8dc" />
              <rect x="5" y="6" width="9" height="9" fill="none" stroke="#111" strokeWidth="1.4" />
              <path d="M10 22 C15 20 20 15 23 10 L20 19 Z" fill="#5a5ac8" stroke="#222" strokeWidth="0.6" />
            </Ico>
          </NavButton>
          <NavButton toggle>
            <Ico size={22}>
              <path d="M3 1 V16 L7 13 L10 20 L12 19 L10 12 L15 12 Z" fill="#e8e8e8" stroke="#222" />
              <path d="M10 22 C15 20 20 15 23 10 L20 19 Z" fill="#5a5ac8" stroke="#222" strokeWidth="0.6" />
            </Ico>
          </NavButton>
        </div>
      </div>
      <div className="flex items-center pl-[3px] mt-[3px] text-[12px] text-[#222]">
        <div className="w-[70px] h-[23px] bg-white border border-[#bdbdbd] flex items-center justify-center">1 : 1.15</div>
        <div className="relative ml-[7px] w-[156px] h-[2px] bg-[#bdbdbd]">
          <span className="absolute left-[47px] top-[-8px] w-[5px] h-[18px] rounded-[2px] bg-[#efefef] border border-[#8a8a8a]" />
        </div>
        <div className="ml-[11px] w-[71px] h-[23px] bg-white border border-[#bdbdbd] flex items-center">
          <span className="flex-1 text-center">0°</span>
          <div className="w-[16px] h-[21px] flex flex-col border-l border-[#dcdcdc]">
            <span className="flex-1 flex items-center justify-center bg-[#eceef2] border-b border-[#c4c4c4]">
              <svg width="7" height="5" viewBox="0 0 7 5"><polygon points="0,5 3.5,0 7,5" fill="#5c7ca4" /></svg>
            </span>
            <span className="flex-1 flex items-center justify-center bg-[#eceef2]">
              <svg width="7" height="5" viewBox="0 0 7 5"><polygon points="0,0 3.5,5 7,0" fill="#5c7ca4" /></svg>
            </span>
          </div>
        </div>
        <div className="ml-[8px]">
          <Ico size={22}>{icons.help}</Ico>
        </div>
      </div>
    </div>
  )
}

function WinButton({ type, hot = false }: { type: 'min' | 'max' | 'close'; hot?: boolean }) {
  return (
    <div
      className={
        hot
          ? 'w-[28px] h-[17px] rounded-[2px] border border-[#8a3a32] bg-gradient-to-b from-[#e89a88] to-[#b83a2c] flex items-center justify-center'
          : 'w-[28px] h-[17px] rounded-[2px] border border-[#8ea4ba] bg-gradient-to-b from-[#d6e2ee] to-[#bccfe0] flex items-center justify-center'
      }
    >
      {type === 'min' && <span className="mt-[4px] w-[10px] h-[4px] bg-white border border-[#4a5a6a]" />}
      {type === 'max' && (
        <span className="w-[10px] h-[9px] bg-white/60 border border-[#3a4a5a] flex items-center justify-center">
          <span className="w-[4px] h-[2px] border border-[#3a4a5a]" />
        </span>
      )}
      {type === 'close' && (
        <svg width="12" height="10" viewBox="0 0 12 10">
          <path d="M1.5 1.5 L10.5 8.5 M10.5 1.5 L1.5 8.5" stroke={hot ? '#fff' : '#54606c'} strokeWidth="2.6" />
        </svg>
      )}
    </div>
  )
}

function BandWindow({ x, y, title, land, active = false }: { x: number; y: number; title: string; land: string; active?: boolean }) {
  return (
    <div
      className={
        active
          ? 'absolute w-[638px] h-[479px] border border-[#10202e] bg-[#b8d2ea] flex flex-col'
          : 'absolute w-[638px] h-[479px] border border-[#10202e] bg-[#d4e0ec] flex flex-col'
      }
      style={{ left: x, top: y }}
    >
      <div
        className={
          active
            ? 'h-[25px] flex items-center pl-[5px] pr-[3px] bg-gradient-to-b from-[#9ab6d4] to-[#b9d2e9] text-[#111]'
            : 'h-[25px] flex items-center pl-[5px] pr-[3px] bg-gradient-to-b from-[#b4c7d9] to-[#d6e4f0] text-[#667]'
        }
      >
        <BandIcon kind="open" />
        <span className="ml-[4px] text-[11.5px] flex-1 whitespace-nowrap">{title}</span>
        <div className="flex gap-[2px]">
          <WinButton type="min" />
          <WinButton type="max" />
          <WinButton type="close" hot={active} />
        </div>
      </div>
      <div className="relative mx-[6px] h-[450px] overflow-hidden">
        <svg width="625" height="450" viewBox="60 108 1439 1354" preserveAspectRatio="none" className="block">
          <BandPicture rich={active} land={land} />
        </svg>
        <Compass />
      </div>
    </div>
  )
}

function DocTab({ label, active = false }: { label: string; active?: boolean }) {
  return (
    <div
      className={
        active
          ? 'w-[77px] h-[19px] flex items-center pl-[8px] pr-[5px] bg-[#f6f6f6] border border-b-0 border-[#a8a8a8] rounded-t-[5px] text-[#333]'
          : 'w-[76px] h-[19px] flex items-center pl-[7px] pr-[5px] bg-[#f0f0f0] border border-b-0 border-l-0 border-[#a8a8a8] rounded-tr-[5px] text-[#8a8a8a]'
      }
    >
      <span className="flex-1 whitespace-nowrap">{label}</span>
      <svg width="9" height="9" viewBox="0 0 9 9">
        <path d="M1 1 L8 8 M8 1 L1 8" stroke="#222" strokeWidth="1.6" />
      </svg>
    </div>
  )
}

const toolbarLeft: string[] = [
  'new', 'open', 'save', 'sep', 'checks', 'doc', 'sep', 'puzzle', 'help', 'grip1',
  'eyeNo', 'eyeShape', 'eyeGrid', 'eyeBlob', 'eyePin', 'eyeGcp', 'grip2',
  'infoDb', 'phi', 'sigma', 'hist', 'curve', 'scatter', 'profile', 'grip3',
  'q1', 'q2', 'dbBig', 'contrast', 'uncert', 'layers', 'layersRed', 'nav', 'dbInfo', 'shapeInfo', 'gcpP', 'pinP', 'histColor', 'globe',
]

function ToolCell({ name }: { name: string }) {
  if (name === 'sep') return <div className="w-[11px] flex justify-center"><span className="w-[1px] h-[22px] bg-[#9a9a9a]" /></div>
  if (name === 'grip1') return <div className="w-[11px] flex justify-center"><Grip vertical /></div>
  if (name === 'grip2') return <div className="w-[14px] flex justify-center"><Grip vertical /></div>
  if (name === 'grip3') return <div className="w-[13px] flex justify-center"><Grip vertical /></div>
  if (name === 'q1' || name === 'q2') {
    return <div className="w-[20px] flex justify-center"><Ico size={22}>{icons.q1}</Ico></div>
  }
  if (name === 'puzzle' || name === 'help') return <div className="w-[27px] flex justify-center"><Ico>{icons[name]}</Ico></div>
  return <div className="w-[28px] flex justify-center"><Ico>{icons[name]}</Ico></div>
}

const rightTools: [string, number][] = [
  ['arrow', 27], ['ruler', 24], ['lens', 30], ['hand', 27], ['pinPlus', 27], ['gcpPlus', 26], ['wand', 26], ['linePlus', 26], ['polyPlus', 28],
  ['rectPlus', 27], ['circlePlus', 27], ['polyFill', 26], ['shapes', 24], ['grip', 18], ['xy', 26], ['bits', 28], ['hex', 24], ['star', 25],
  ['grip', 15], ['clockPlot', 27], ['clockPerson', 27], ['clockGrid', 26], ['clockPlay', 26],
]

function RightBar() {
  return (
    <div className="w-[30px] ml-auto flex flex-col items-center bg-[#f0f0f0] pt-[2px] pr-[2px] shrink-0">
      <Grip />
      {rightTools.map(([name, h], i) => (
        <div key={i} className="flex items-center justify-center" style={{ height: h }}>
          {name === 'grip' ? (
            <Grip />
          ) : name === 'hand' ? (
            <div className="w-[27px] h-[26px] bg-white border border-[#9ab4cc] rounded-[3px] flex items-center justify-center">
              <Ico size={22}>{icons.hand}</Ico>
            </div>
          ) : (
            <Ico>{icons[name]}</Ico>
          )}
        </div>
      ))}
    </div>
  )
}

const menus: [string, string, string][] = [
  ['F', 'ile', 'w-[33px]'], ['E', 'dit', 'w-[35px]'], ['V', 'iew', 'w-[39px]'], ['A', 'nalysis', 'w-[57px]'], ['U', 'tilities', 'w-[53px]'],
  ['P', 'rocessing', 'w-[71px]'], ['G', 'raphs', 'w-[51px]'], ['W', 'indow', 'w-[59px]'], ['H', 'elp', 'w-[30px]'],
]

export default function App() {
  return (
    <div className="w-[1920px] h-[1080px] overflow-hidden flex flex-col bg-[#f0f0f0] text-[11px] text-[#1a1a1a] font-['Liberation_Sans',sans-serif]">
      {/* window title */}
      <div className="h-[20px] flex items-center bg-gradient-to-r from-[#315f8d] via-[#5d8ab4] to-[#33618f] border-b border-[#24425f] shrink-0">
        <svg width="16" height="18" viewBox="0 0 16 18" className="shrink-0">
          <path d="M0 14 L14 1 L16 1 V18 H0 Z" fill="#2a2a2a" />
          <path d="M0 10 L10 1 H14 L0 14 Z" fill="#e8eef4" />
          <text x="8" y="17" textAnchor="middle" fontSize="7" fill="#fff" fontFamily="Liberation Sans, sans-serif">S-3</text>
        </svg>
        <span className="ml-[5px] text-[12px] text-[#101418] whitespace-nowrap [text-shadow:0_0_6px_#dfe8f0,0_0_6px_#dfe8f0]">
          [1] Oa01_reflectance - [...\xfdumanifest.xml] - [Session not saved] - ESA S-3 Toolbox 0.5
        </span>
        <div className="ml-auto mr-[3px] h-[19px] flex self-start">
          <div className="w-[27px] border border-t-0 border-[#3a5a7a] rounded-bl-[3px] bg-gradient-to-b from-[#9ab4cc] to-[#5a82a8] flex items-center justify-center">
            <span className="mt-[5px] w-[11px] h-[3px] bg-white" />
          </div>
          <div className="w-[27px] border border-t-0 border-l-0 border-[#3a5a7a] bg-gradient-to-b from-[#9ab4cc] to-[#5a82a8] flex items-center justify-center">
            <span className="w-[11px] h-[8px] border-2 border-white" />
          </div>
          <div className="w-[50px] border border-t-0 border-l-0 border-[#7a2a20] rounded-br-[3px] bg-gradient-to-b from-[#dc8a78] to-[#b03a2a] flex items-center justify-center">
            <svg width="14" height="10" viewBox="0 0 14 10">
              <path d="M2 1 L12 9 M12 1 L2 9" stroke="#fff" strokeWidth="3" />
            </svg>
          </div>
        </div>
      </div>

      {/* menu bar */}
      <div className="h-[24px] flex items-center pl-[17px] pt-[5px] text-[12px] text-[#222] shrink-0">
        {menus.map(([u, rest, w]) => (
          <span key={u} className={w}>
            <span className="underline">{u}</span>
            {rest}
          </span>
        ))}
      </div>

      {/* main toolbar */}
      <div className="h-[33px] flex items-center pl-[9px] pb-[2px] shrink-0">
        {toolbarLeft.map((name, i) => (
          <ToolCell key={i} name={name} />
        ))}
      </div>

      <div className="flex-1 flex min-h-0">
        <div className="w-[366px] flex flex-col shrink-0">
          <ProductsPanel />
          <div className="flex pl-[5px] h-[21px] mt-[1px] items-stretch">
            <BottomTab
              active
              width="w-[73px]"
              label="Products"
              icon={<svg width="15" height="16" viewBox="0 0 16 18"><Db x={0} y={0} /></svg>}
            />
            <div className="w-[79px] flex items-center pl-[6px] text-[#8a8a9a] border-r border-[#a8a8a8] whitespace-nowrap">
              <Ico size={15}>{icons.dbInfo}</Ico>
              <span className="ml-[3px]">Pixel Info</span>
            </div>
          </div>
          <NavigationPanel />
          <div className="flex pl-[8px] h-[24px] mt-[3px]">
            <BottomTab width="w-[134px]" label="Uncertainty Visualisa.." icon={<Ico size={15}>{icons.uncert}</Ico>} />
            <BottomTab active width="w-[81px]" label="Navigation" icon={<Ico size={15}>{icons.nav}</Ico>} />
            <div className="w-[124px] h-[21px] flex items-center pl-[6px] text-[#7a7a8a] border-r border-[#a8a8a8] whitespace-nowrap">
              <Ico size={15}>{icons.contrast}</Ico>
              <span className="ml-[3px]">Colour Manipulation</span>
            </div>
          </div>
        </div>

        <div className="flex-1 flex flex-col min-w-0">
          <div className="h-[20px] flex items-end pl-[5px] border-b border-[#a0a0a0] shrink-0">
            <DocTab active label="[1] Oa0.." />
            <DocTab label="[1] Oa0.." />
            <DocTab label="[1] Oa0.." />
            <DocTab label="[1] Oa1.." />
          </div>
          <div className="relative h-[956px] bg-[#23466b] overflow-hidden">
            <svg width="0" height="0" className="absolute">
              <BandDefs />
            </svg>
            <BandWindow x={1} y={1} title="[1] Oa04_reflectance" land="#c8c8c8" />
            <BandWindow x={25} y={25} title="[1] Oa08_reflectance" land="#c8c8c8" />
            <BandWindow x={49} y={49} title="[1] Oa10_reflectance" land="#cfcfcf" />
            <BandWindow x={73} y={73} title="[1] Oa01_reflectance" land="#ababab" active />
          </div>
        </div>

        <RightBar />
      </div>

      {/* status bar */}
      <div className="h-[24px] flex items-center border-t-2 border-[#a8a8a8] text-[11px] shrink-0">
        <span className="pl-[5px] w-[1289px] whitespace-nowrap">[1] Oa01_reflectance - Satellite coordinates</span>
        <span className="w-[177px] text-center border-l border-[#a8a8a8] text-[#333]">No pos.</span>
        <span className="w-[177px] text-center border-l border-[#a8a8a8] text-[#111]">17:06:17</span>
        <span className="ml-[3px] w-[66px] h-[19px] bg-[#ecebb5] border-l border-[#a8a8a8]" />
        <span className="w-[165px] pl-[19px] border-l border-[#a8a8a8] text-[#333]">96M of 335M</span>
        <span className="w-[21px] h-[19px] flex items-center justify-center border-x border-[#a8a8a8]">
          <svg width="14" height="16" viewBox="0 0 14 16">
            <path d="M1 3 H13 L11 15 H3 Z" fill="#0e9a3a" />
            <path d="M1 2 L12 0 V3 H1 Z" fill="#0a7a2c" />
            <circle cx="7" cy="9" r="3" fill="none" stroke="#fff" strokeWidth="1.4" strokeDasharray="3 1" />
          </svg>
        </span>
      </div>
    </div>
  )
}
